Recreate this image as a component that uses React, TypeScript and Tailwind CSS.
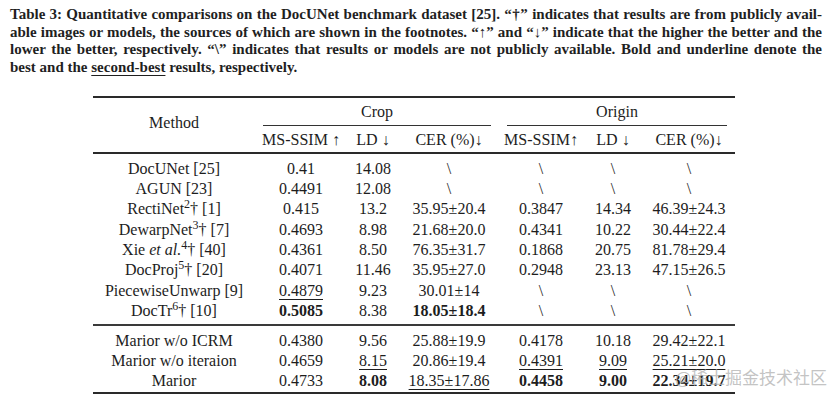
import React from "react";

type Cell = string;

const serif = { fontFamily: '"Liberation Serif", "Times New Roman", serif' };

function Val({ v }: { v: Cell }) {
  if (v.startsWith("*")) return <span className="font-bold">{v.slice(1)}</span>;
  if (v.startsWith("_"))
    return <span className="underline decoration-1 underline-offset-[3px]">{v.slice(1)}</span>;
  return <span>{v}</span>;
}

const rowsA: { m: React.ReactNode; v: Cell[] }[] = [
  { m: <>DocUNet [25]</>, v: ["0.41", "14.08", "\\", "\\", "\\", "\\"] },
  { m: <>AGUN [23]</>, v: ["0.4491", "12.08", "\\", "\\", "\\", "\\"] },
  { m: <>RectiNet<sup>2</sup>† [1]</>, v: ["0.415", "13.2", "35.95±20.4", "0.3847", "14.34", "46.39±24.3"] },
  { m: <>DewarpNet<sup>3</sup>† [7]</>, v: ["0.4693", "8.98", "21.68±20.0", "0.4341", "10.22", "30.44±22.4"] },
  { m: <>Xie <i>et al.</i><sup>4</sup>† [40]</>, v: ["0.4361", "8.50", "76.35±31.7", "0.1868", "20.75", "81.78±29.4"] },
  { m: <>DocProj<sup>5</sup>† [20]</>, v: ["0.4071", "11.46", "35.95±27.0", "0.2948", "23.13", "47.15±26.5"] },
  { m: <>PiecewiseUnwarp [9]</>, v: ["_0.4879", "9.23", "30.01±14", "\\", "\\", "\\"] },
  { m: <>DocTr<sup>6</sup>† [10]</>, v: ["*0.5085", "8.38", "*18.05±18.4", "\\", "\\", "\\"] },
];

const rowsB: { m: React.ReactNode; v: Cell[] }[] = [
  { m: <>Marior w/o ICRM</>, v: ["0.4380", "9.56", "25.88±19.9", "0.4178", "10.18", "29.42±22.1"] },
  { m: <>Marior w/o iteraion</>, v: ["0.4659", "_8.15", "20.86±19.4", "_0.4391", "_9.09", "_25.21±20.0"] },
  { m: <>Marior</>, v: ["0.4733", "*8.08", "_18.35±17.86", "*0.4458", "*9.00", "*22.34±19.7"] },
];

const cols = "grid grid-cols-[162px_92px_52px_100px_84px_60px_92px]";

function Row({ m, v, h }: { m: React.ReactNode; v: Cell[]; h: string }) {
  return (
    <div className={`${cols} ${h} items-center text-center`}>
      <div className="whitespace-nowrap">{m}</div>
      {v.map((c, i) => (
        <div key={i} className="whitespace-nowrap">
          <Val v={c} />
        </div>
      ))}
    </div>
  );
}

export default function App() {
  const caption = [
    "Table 3: Quantitative comparisons on the DocUNet benchmark dataset [25]. “†” indicates that results are from publicly avail-",
    "able images or models, the sources of which are shown in the footnotes. “↑” and “↓” indicate that the higher the better and the",
    "lower the better, respectively. “\\” indicates that results or models are not publicly available. Bold and underline denote the",
  ];
  return (
    <div className="relative w-[830px] h-[402px] bg-white overflow-hidden text-[#1d1d1d]" style={serif}>
      <div className="pt-[6px] pl-[10px] pr-[8px] font-bold text-[15px] leading-[17.7px] text-[#1f1f1f]">
        {caption.map((l, i) => (
          <div key={i} className="whitespace-nowrap text-justify [text-align-last:justify]">
            {l}
          </div>
        ))}
        <div className="whitespace-nowrap">
          best and the <span className="underline decoration-1 underline-offset-[3px]">second-best</span> results, respectively.
        </div>
      </div>

      <div className="ml-[93px] mt-[19px] w-[642px] text-[16px]">
        <div className="h-[2px] bg-[#2a2a2a]" />
        {/* header */}
        <div className={`${cols} grid-rows-[28px_26px]`}>
          <div className="row-span-2 flex items-center justify-center pb-[4px]">Method</div>
          <div className="col-span-3 flex flex-col">
            <div className="h-[27px] flex items-center justify-center pt-[2px]">Crop</div>
            <div className="h-px mx-[8px] bg-[#333]" />
          </div>
          <div className="col-span-3 flex flex-col">
            <div className="h-[27px] flex items-center justify-center pt-[2px]">Origin</div>
            <div className="h-px mx-[8px] bg-[#333]" />
          </div>
          <div className="flex items-center justify-center pt-[2px] whitespace-nowrap">MS-SSIM ↑</div>
          <div className="flex items-center justify-center pt-[2px] whitespace-nowrap">LD ↓</div>
          <div className="flex items-center justify-center pt-[2px] whitespace-nowrap">CER (%)↓</div>
          <div className="flex items-center justify-center pt-[2px] whitespace-nowrap">MS-SSIM↑</div>
          <div className="flex items-center justify-center pt-[2px] whitespace-nowrap">LD ↓</div>
          <div className="flex items-center justify-center pt-[2px] whitespace-nowrap">CER (%)↓</div>
        </div>
        <div className="h-[2px] bg-[#2a2a2a]" />
        <div className="pt-[3px] pb-[5px]">
          {rowsA.map((r, i) => (
            <Row key={i} m={r.m} v={r.v} h="h-[20.3px]" />
          ))}
        </div>
        <div className="h-[2px] bg-[#3a3a3a]" />
        <div className="pt-[3px] pb-[3px]">
          {rowsB.map((r, i) => (
            <Row key={i} m={r.m} v={r.v} h="h-[20px]" />
          ))}
        </div>
        <div className="h-[2px] bg-[#2a2a2a]" />
      </div>

      <div
        className="absolute left-[675px] top-[366px] text-[17px] leading-[22px] text-[#b4b4b4]/80 whitespace-nowrap"
        style={{ fontFamily: '"Noto Sans CJK SC", sans-serif' }}
      >
        @稀土掘金技术社区
      </div>
    </div>
  );
}
